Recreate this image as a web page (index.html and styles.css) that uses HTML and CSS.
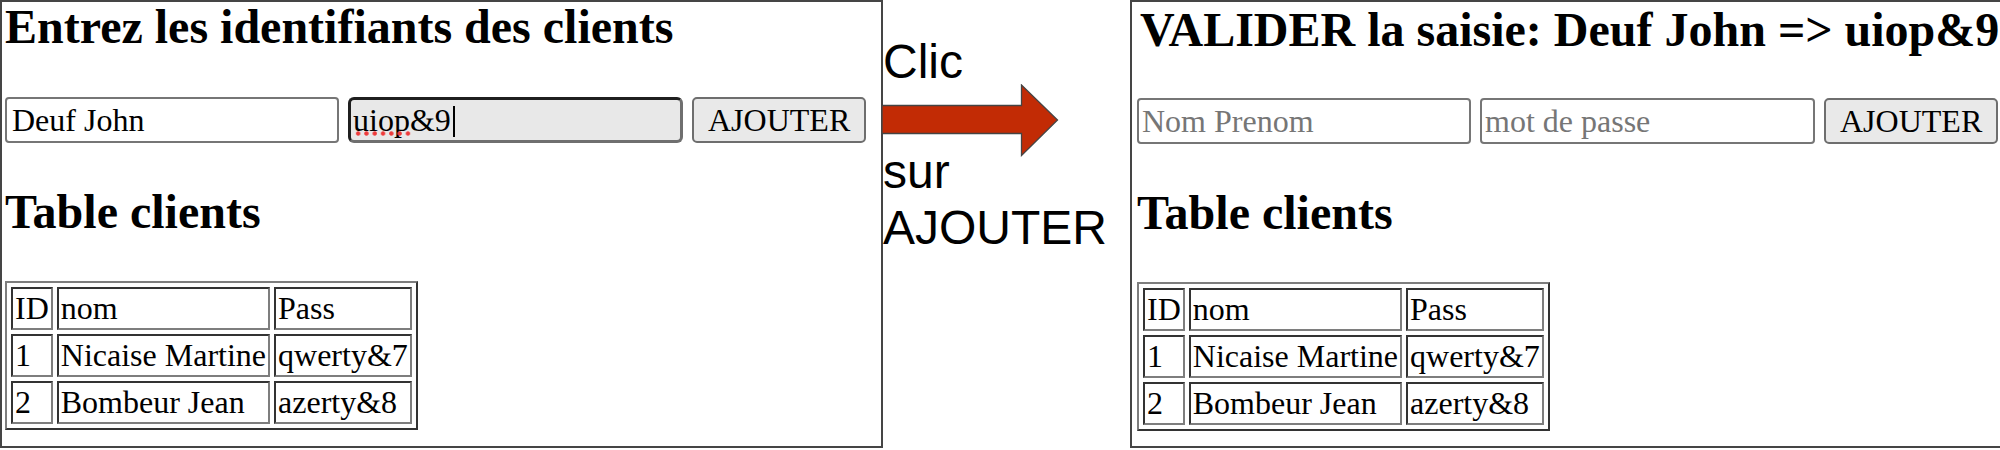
FILE: index.html
```html
<!DOCTYPE html>
<html lang="fr">
<head>
  <meta charset="UTF-8">
  <meta name="viewport" content="width=device-width, initial-scale=1.0">
  <title>Clients</title>
  <link rel="stylesheet" href="styles.css">
</head>
<body>
  <div class="page">
    <section class="panel panel-input">
      <h2 class="title">Entrez les identifiants des clients</h2>
      <form class="entry">
        <input type="text" class="field field-filled" value="Deuf John" spellcheck="false">
        <span class="field-focus">
          <input type="text" class="field field-active" value="uiop&amp;9" spellcheck="false">
        </span>
        <button type="button" class="add">AJOUTER</button>
      </form>
      <h2 class="title table-title">Table clients</h2>
      <table class="clients">
        <tr><td>ID</td><td>nom</td><td>Pass</td></tr>
        <tr><td>1</td><td>Nicaise Martine</td><td>qwerty&amp;7</td></tr>
        <tr><td>2</td><td>Bombeur Jean</td><td>azerty&amp;8</td></tr>
      </table>
    </section>

    <div class="step">
      <div class="clic">Clic</div>
      <svg class="arrow" width="178" height="73" viewBox="0 0 178 73">
        <path d="M0 21.5 H139.5 V1 L175.5 36 L139.5 71.5 V49.5 H0 Z" fill="#c22b05" stroke="#444" stroke-width="1.3"/>
      </svg>
      <div class="sur">sur<br>AJOUTER</div>
    </div>

    <section class="panel panel-result">
      <h2 class="title main-title">VALIDER la saisie: Deuf John =&gt; uiop&amp;9</h2>
      <form class="entry">
        <input type="text" class="field" placeholder="Nom Prenom">
        <span class="field-wrap">
          <input type="text" class="field" placeholder="mot de passe">
        </span>
        <button type="button" class="add">AJOUTER</button>
      </form>
      <h2 class="title table-title">Table clients</h2>
      <table class="clients">
        <tr><td>ID</td><td>nom</td><td>Pass</td></tr>
        <tr><td>1</td><td>Nicaise Martine</td><td>qwerty&amp;7</td></tr>
        <tr><td>2</td><td>Bombeur Jean</td><td>azerty&amp;8</td></tr>
      </table>
    </section>
  </div>
</body>
</html>
```

FILE: styles.css
```css
body {
  margin: 0;
  background: #fff;
  color: #000;
  font-family: 'Liberation Serif', 'Times New Roman', serif;
  overflow: hidden;
}

.page {
  display: flex;
  height: 448px;
}

.panel {
  box-sizing: border-box;
  height: 448px;
  border: 2px solid #454545;
  padding-left: 3px;
}

.panel-input {
  width: 883px;
  flex: none;
}

.panel-result {
  flex: 1;
  border-right: none;
  padding-left: 5px;
}

.title {
  margin: 0;
  font-size: 48px;
  line-height: 50px;
  font-weight: bold;
  white-space: nowrap;
}

.main-title {
  margin-top: 3px;
  padding-left: 3px;
}

.entry {
  display: flex;
  gap: 9px;
  margin: 45px 0 0;
}

.panel-result .entry {
  margin-top: 43px;
}

.field {
  box-sizing: border-box;
  width: 334px;
  height: 46px;
  margin: 0;
  padding: 0 3px;
  border: 2px solid #767676;
  border-radius: 4px;
  background: #fff;
  font-family: inherit;
  font-size: 32px;
  color: #000;
  outline: none;
}

.field-filled {
  padding-left: 5px;
}

.field::placeholder {
  color: #767676;
}

.field-focus,
.field-wrap {
  position: relative;
  display: block;
  width: 335px;
}

.field-focus .field,
.field-wrap .field {
  width: 100%;
}

.field-active {
  border: 3px solid;
  border-color: #1f1f1f #6f6f6f #6f6f6f #1f1f1f;
  border-radius: 6px;
  padding: 0 2px;
  background: #e8e8e8;
}

/* caret */
.field-focus::before {
  content: "";
  position: absolute;
  left: 105px;
  top: 9px;
  width: 2px;
  height: 31px;
  background: #000;
}

/* spelling dots */
.field-focus::after {
  content: "";
  position: absolute;
  left: 6px;
  top: 34px;
  width: 58px;
  height: 5px;
  background: radial-gradient(circle, #ee3b3b 1.7px, rgba(238, 59, 59, 0.4) 2.3px, transparent 2.7px) 0 0 / 8.3px 5px repeat-x;
}

.add {
  box-sizing: border-box;
  height: 46px;
  margin: 0;
  padding: 0 14px;
  border: 2px solid #6e6e6e;
  border-radius: 5px;
  background: #e9e9e9;
  font-family: inherit;
  font-size: 32px;
  color: #000;
}

.table-title {
  margin-top: 44px;
}

.clients {
  margin-top: 44px;
  border-collapse: separate;
  border-spacing: 4px;
  border: 2px solid;
  border-color: #7e7e7e #333 #333 #7e7e7e;
  font-size: 32px;
}

.clients td {
  padding: 1px 2px;
  border: 2px solid;
  border-color: #333 #7e7e7e #7e7e7e #333;
  white-space: nowrap;
}

.step {
  width: 247px;
  flex: none;
  font-family: 'Liberation Sans', Arial, sans-serif;
  font-size: 48px;
  color: #000;
}

.clic {
  margin-top: 36px;
  line-height: 52px;
}

.arrow {
  display: block;
  margin: -4px 0 0 -1px;
}

.sur {
  margin-top: -13px;
  line-height: 56px;
}
```
